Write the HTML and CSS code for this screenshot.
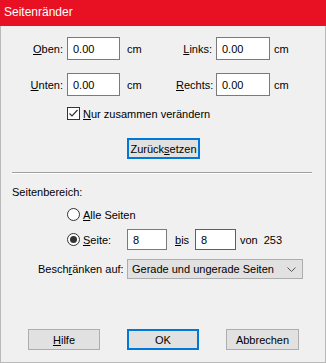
FILE: index.html
```html
<!DOCTYPE html>
<html lang="de">
<head>
    <meta charset="UTF-8">
    <title>Seitenränder</title>
    <link rel="stylesheet" href="styles.css">
</head>
<body>
    <div class="window">
        <div class="titlebar">Seitenränder</div>

        <div class="dialog">
            <div class="row margin-row first">
                <label class="lbl lbl-left"><u>O</u>ben:</label>
                <input class="field field-margin" value="0.00">
                <span class="unit unit-left">cm</span>
                <label class="lbl lbl-right"><u>L</u>inks:</label>
                <input class="field field-margin wide" value="0.00">
                <span class="unit">cm</span>
            </div>
            <div class="row margin-row">
                <label class="lbl lbl-left"><u>U</u>nten:</label>
                <input class="field field-margin" value="0.00">
                <span class="unit unit-left">cm</span>
                <label class="lbl lbl-right"><u>R</u>echts:</label>
                <input class="field field-margin wide" value="0.00">
                <span class="unit">cm</span>
            </div>

            <div class="row check-row">
                <span class="checkbox">
                    <svg width="11" height="11" viewBox="0 0 11 11">
                        <path d="M1.5 5.5 L4 8 L9.5 2" fill="none" stroke="#333" stroke-width="1.2"/>
                    </svg>
                </span>
                <span><u>N</u>ur zusammen verändern</span>
            </div>

            <div class="row reset-row">
                <button class="btn btn-focus reset">Zurück<u>s</u>etzen</button>
            </div>

            <div class="separator"></div>

            <div class="section-title">Seitenbereich:</div>

            <div class="row radio-row">
                <span class="radio"></span>
                <span><u>A</u>lle Seiten</span>
            </div>

            <div class="row page-row">
                <span class="radio-wrap">
                    <span class="radio checked"></span>
                    <span><u>S</u>eite:</span>
                </span>
                <input class="field field-page" value="8">
                <span class="bis"><u>b</u>is</span>
                <input class="field field-page focused" value="8">
                <span class="von">von</span>
                <span class="total">253</span>
            </div>

            <div class="row limit-row">
                <label class="limit-label">Besch<u>r</u>änken auf:</label>
                <div class="select">
                    <span>Gerade und ungerade Seiten</span>
                    <svg class="chevron" width="9" height="5" viewBox="0 0 9 5">
                        <path d="M0.5 0.5 L4.5 4.5 L8.5 0.5" fill="none" stroke="#555" stroke-width="1"/>
                    </svg>
                </div>
            </div>

            <div class="row footer">
                <button class="btn help"><u>H</u>ilfe</button>
                <button class="btn btn-focus ok">OK</button>
                <button class="btn cancel">Abbrechen</button>
            </div>
        </div>
    </div>
</body>
</html>
```
FILE: styles.css
```css
body {
    margin: 0;
    font-family: "Liberation Sans", Arial, sans-serif;
    font-size: 11px;
    color: #000;
}

.window {
    width: 326px;
    height: 363px;
    background-color: #f0f0f0;
    display: flex;
    flex-direction: column;
}

.titlebar {
    height: 26px;
    background-color: #e81123;
    color: #fff;
    font-size: 12px;
    line-height: 25px;
    padding-left: 4px;
}

.dialog {
    flex: 1;
    border: 1px solid #b9b9b9;
    border-top: none;
    display: flex;
    flex-direction: column;
}

u {
    text-decoration: underline;
    text-underline-offset: 1px;
}

.row {
    display: flex;
    align-items: center;
}

.margin-row {
    height: 23px;
    margin-top: 13px;
}

.margin-row.first {
    margin-top: 11px;
}

.lbl {
    text-align: right;
    margin-right: 4px;
}

.lbl-left {
    width: 62px;
}

.lbl-right {
    width: 36px;
}

.field {
    box-sizing: border-box;
    border: 1px solid #7a7a7a;
    background-color: #fff;
    font: inherit;
    color: #000;
    padding: 0 0 0 5px;
    margin: 0;
    outline: none;
}

.field-margin {
    width: 53px;
    height: 23px;
}

.field-margin.wide {
    width: 54px;
}

.unit {
    margin-left: 4px;
}

.unit-left {
    margin-left: 7px;
    width: 49px;
}

.check-row {
    margin-top: 11px;
    padding-left: 66px;
    height: 13px;
    gap: 3px;
}

.checkbox {
    box-sizing: border-box;
    width: 13px;
    height: 13px;
    border: 1px solid #333;
    background-color: #fff;
    display: flex;
}

.reset-row {
    margin-top: 18px;
    padding-left: 126px;
}

.btn {
    box-sizing: border-box;
    height: 21px;
    border: 1px solid #adadad;
    background-color: #e1e1e1;
    font: inherit;
    color: #000;
    padding: 0;
    margin: 0;
}

.btn-focus {
    border: 2px solid #0078d7;
}

.reset {
    width: 73px;
}

.separator {
    margin: 13px 13px 0 11px;
    border-top: 1px solid #a0a0a0;
    border-bottom: 1px solid #fff;
}

.section-title {
    margin-top: 11px;
    padding-left: 11px;
    line-height: 15px;
}

.radio-row {
    margin-top: 8px;
    padding-left: 66px;
    height: 13px;
    gap: 3px;
}

.radio {
    box-sizing: border-box;
    width: 13px;
    height: 13px;
    border: 1px solid #333;
    border-radius: 50%;
    background-color: #fff;
    display: flex;
    align-items: center;
    justify-content: center;
}

.radio.checked::after {
    content: "";
    width: 7px;
    height: 7px;
    border-radius: 50%;
    background-color: #333;
}

.page-row {
    margin-top: 8px;
    padding-left: 66px;
    height: 21px;
}

.radio-wrap {
    width: 60px;
    display: flex;
    align-items: center;
    gap: 3px;
}

.field-page {
    width: 40px;
    height: 21px;
}

.field-page.focused {
    width: 41px;
    border-color: #0078d7;
}

.bis {
    margin-left: 8px;
    width: 20px;
}

.von {
    margin-left: 4px;
}

.total {
    margin-left: 6px;
}

.limit-row {
    margin-top: 9px;
    padding-left: 37px;
}

.limit-label {
    width: 89px;
}

.select {
    box-sizing: border-box;
    width: 176px;
    height: 20px;
    border: 1px solid #adadad;
    background-color: #e1e1e1;
    display: flex;
    align-items: center;
    justify-content: space-between;
    padding: 0 6px 0 4px;
}

.footer {
    margin-top: 50px;
    padding-left: 27px;
}

.help {
    width: 72px;
}

.ok {
    width: 72px;
    margin-left: 27px;
}

.cancel {
    width: 73px;
    margin-left: 27px;
}
```
